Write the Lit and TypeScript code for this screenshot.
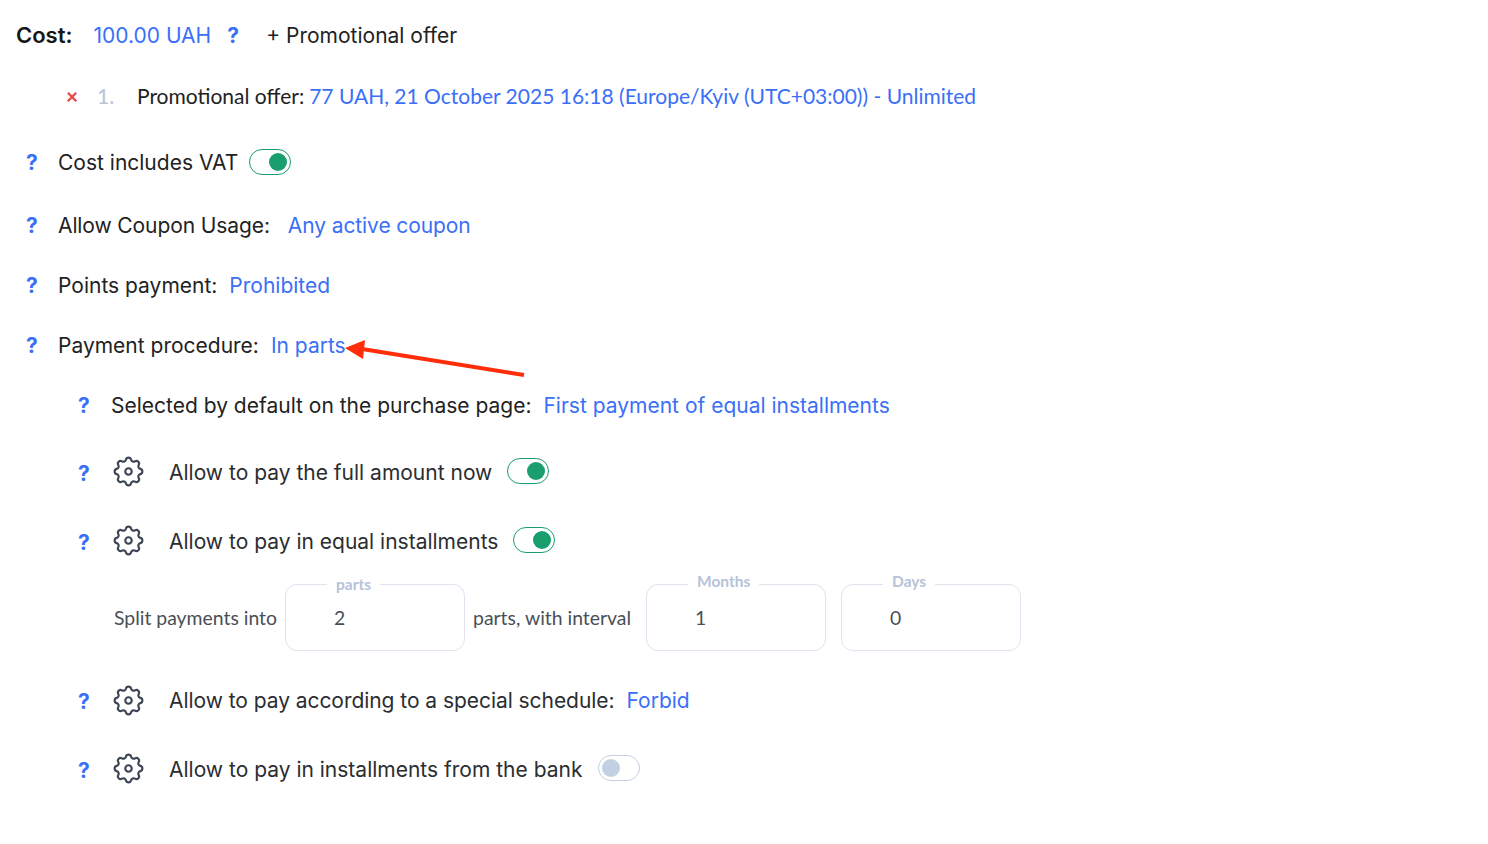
import { LitElement, css, html } from "lit";
import { customElement } from "lit/decorators.js";

const gear = html`<svg class="gear" viewBox="0 0 24 24" fill="none" stroke="currentColor" stroke-width="1.4" stroke-linecap="round" stroke-linejoin="round">
  <path d="M10.325 4.317c.426-1.756 2.924-1.756 3.35 0a1.724 1.724 0 002.573 1.066c1.543-.94 3.31.826 2.37 2.37a1.724 1.724 0 001.065 2.572c1.756.426 1.756 2.924 0 3.35a1.724 1.724 0 00-1.066 2.573c.94 1.543-.826 3.31-2.37 2.37a1.724 1.724 0 00-2.572 1.065c-.426 1.756-2.924 1.756-3.35 0a1.724 1.724 0 00-2.573-1.066c-1.543.94-3.31-.826-2.37-2.37a1.724 1.724 0 00-1.065-2.572c-1.756-.426-1.756-2.924 0-3.35a1.724 1.724 0 001.066-2.573c-.94-1.543.826-3.31 2.37-2.37.996.608 2.296.07 2.572-1.065z"/>
  <circle cx="12" cy="12" r="2.1"/>
</svg>`;

const toggle = (on: boolean) => html`<span class="toggle ${on ? "on" : ""}"><i></i></span>`;
const q = html`<span class="q">?</span>`;

@customElement("app-root")
export class AppRoot extends LitElement {
  static styles = css`
    :host {
      display: block;
      position: relative;
      width: 1488px;
      height: 844px;
      background: #fff;
      color: #222;
      font-family: Inter, sans-serif;
      font-size: 21px;
      overflow: hidden;
    }
    .page {
      display: flex;
      flex-direction: column;
      padding: 20px 0 0 26px;
    }
    .row {
      display: flex;
      align-items: center;
      height: 30px;
      white-space: nowrap;
    }
    .blue { color: #3a6ff7; }
    .q {
      color: #3a6ff7;
      font-weight: 700;
      width: 32px;
      flex: none;
    }
    .cost { margin-left: -10px; }
    .cost b { font-size: 22px; font-weight: 600; color: #161616; margin-right: 21px; }
    .cost .q { margin-left: 16px; width: 39px; }
    .offer {
      margin: 30px 0 0 40px;
      font-family: Lato, sans-serif;
    }
    .offer .x { color: #e5484d; font-weight: 900; width: 31px; }
    .offer .n { color: #b9c6da; font-weight: 500; width: 40px; }
    .offer .blue { margin-left: 5px; }
    .vat { margin-top: 37px; }
    .vat .toggle { margin-left: -1px; }
    .coupon { margin-top: 33px; letter-spacing: -0.1px; }
    .next { margin-top: 30px; }
    .sub { margin-left: 52px; }
    .full { margin-top: 36px; }
    .equal { margin-top: 39px; }
    .special { margin-top: 34px; }
    .bank { margin-top: 38px; }
    .label { margin-right: 12px; }
    .coupon .label { margin-right: 18px; }
    .sub.next .label { padding-left: 1px; }
    .geared .label { padding-top: 2px; color: #2b2d31; }
    .geared .q { padding-top: 4px; }
    .geared .toggle { margin-left: 3px; }
    .special .label { padding-top: 0; letter-spacing: -0.05px; }
    .special .q { padding-top: 3px; }
    .bank .toggle { margin-left: 4px; }
    .gear {
      width: 37px;
      height: 37px;
      flex: none;
      color: #3d4654;
      margin: 0 22px 0 0;
    }
    .toggle {
      display: flex;
      align-items: center;
      width: 42px;
      height: 26px;
      box-sizing: border-box;
      border: 1px solid #c3d0e4;
      border-radius: 13px;
      padding: 0 3px;
    }
    .toggle i {
      width: 18px;
      height: 18px;
      border-radius: 50%;
      background: #c3d0e4;
    }
    .toggle.on { border-color: #1a9e6e; justify-content: flex-end; }
    .toggle.on i { background: #1a9e6e; }
    .split {
      display: flex;
      align-items: center;
      margin: 29px 0 0 88px;
      font-family: Lato, sans-serif;
      font-size: 19.4px;
      color: #4a4f57;
      white-space: nowrap;
      height: 67px;
    }
    .box {
      position: relative;
      box-sizing: border-box;
      width: 180px;
      height: 67px;
      border: 1px solid #e0e2ee;
      border-radius: 12px;
      padding: 0 0 0 48px;
      display: flex;
      align-items: center;
      margin: 0 8px;
    }
    .box.months { margin-left: 15px; margin-right: 0; }
    .box.days { margin-left: 15px; }
    .box span {
      position: absolute;
      left: 41px;
      top: -13px;
      padding: 0 9px;
      background: #fff;
      color: #b6c3d8;
      font-size: 15.5px;
      font-weight: 700;
    }
    .box.low span { top: -10px; }
    .arrow {
      position: absolute;
      left: 340px;
      top: 330px;
    }
  `;

  render() {
    return html`
      <div class="page">
        <div class="row cost">
          <b>Cost:</b><span class="blue">100.00 UAH</span>${q}<span>+ Promotional offer</span>
        </div>
        <div class="row offer">
          <span class="x">×</span><span class="n">1.</span><span>Promotional offer:</span>
          <span class="blue">77 UAH, 21 October 2025 16:18 (Europe/Kyiv (UTC+03:00)) - Unlimited</span>
        </div>
        <div class="row vat">${q}<span class="label">Cost includes VAT</span>${toggle(true)}</div>
        <div class="row coupon">${q}<span class="label">Allow Coupon Usage:</span><span class="blue">Any active coupon</span></div>
        <div class="row next">${q}<span class="label">Points payment:</span><span class="blue">Prohibited</span></div>
        <div class="row next">${q}<span class="label">Payment procedure:</span><span class="blue">In parts</span></div>
        <div class="row sub next">${q}<span class="label">Selected by default on the purchase page:</span><span class="blue">First payment of equal installments</span></div>
        <div class="row sub geared full">${q}${gear}<span class="label">Allow to pay the full amount now</span>${toggle(true)}</div>
        <div class="row sub geared equal">${q}${gear}<span class="label">Allow to pay in equal installments</span>${toggle(true)}</div>
        <div class="split">
          <span>Split payments into</span>
          <div class="box low"><span>parts</span>2</div>
          <span>parts, with interval</span>
          <div class="box months"><span>Months</span>1</div>
          <div class="box days"><span>Days</span>0</div>
        </div>
        <div class="row sub geared special">${q}${gear}<span class="label">Allow to pay according to a special schedule:</span><span class="blue">Forbid</span></div>
        <div class="row sub geared bank">${q}${gear}<span class="label">Allow to pay in installments from the bank</span>${toggle(false)}</div>
      </div>
      <svg class="arrow" width="200" height="60" viewBox="0 0 200 60">
        <path d="M184 45 L22 19" stroke="#ff2d0a" stroke-width="4" fill="none"/>
        <path d="M5 18 L25 10 L23 29 Z" fill="#ff2d0a"/>
      </svg>
    `;
  }
}
